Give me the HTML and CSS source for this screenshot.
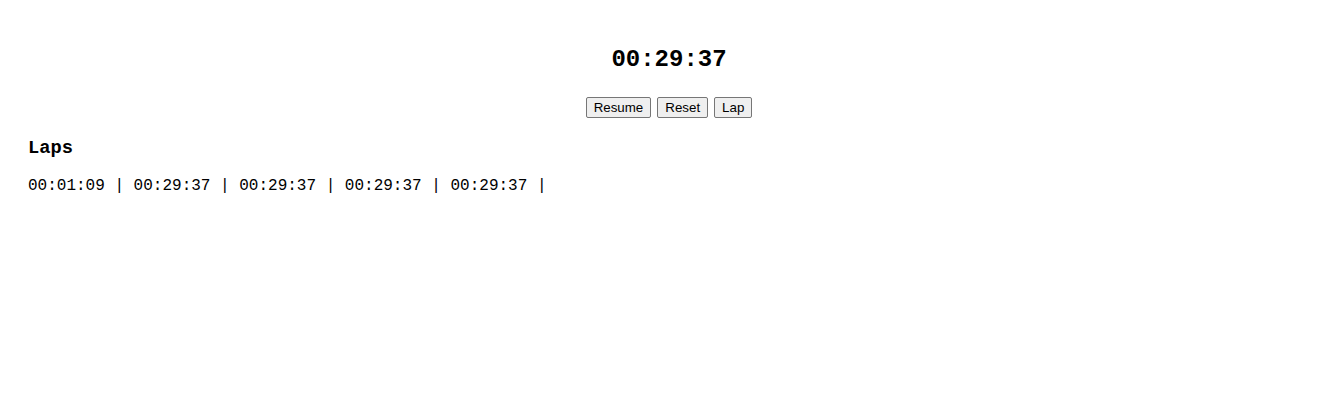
FILE: index.html
```html
<!DOCTYPE html>
<html>
<head>
<meta charset="utf-8">
<link rel="stylesheet" href="styles.css">
</head>
<body>
<div class="app">
  <h2 class="timer">00:29:37</h2>
  <div class="controls">
    <button class="btn">Resume</button>
    <button class="btn">Reset</button>
    <button class="btn">Lap</button>
  </div>
  <h3 class="laps-title">Laps</h3>
  <p class="laps">00:01:09 | 00:29:37 | 00:29:37 | 00:29:37 | 00:29:37 |</p>
</div>
</body>
</html>
```

FILE: styles.css
```css
body {
  margin: 8px;
  font-family: "Liberation Mono", "Courier New", monospace;
  font-size: 16px;
  color: #000;
  background: #fff;
}
.app {
  padding: 20px 5px 20px 20px;
}
.timer {
  text-align: center;
  font-size: 24px;
  font-weight: bold;
  margin: 18px 0 24px;
}
.controls {
  display: flex;
  justify-content: center;
  gap: 6px;
}
.btn {
  font-family: "Liberation Sans", Arial, sans-serif;
  font-size: 13.333px;
  margin: 0;
  padding: 2px 7px;
  background: #efefef;
  border: 1px solid #767676;
  border-radius: 2px;
  color: #000;
}
.laps-title {
  font-size: 18.72px;
  font-weight: bold;
  margin: 18.72px 0;
}
.laps {
  margin: 16px 0;
  white-space: pre;
}
```
